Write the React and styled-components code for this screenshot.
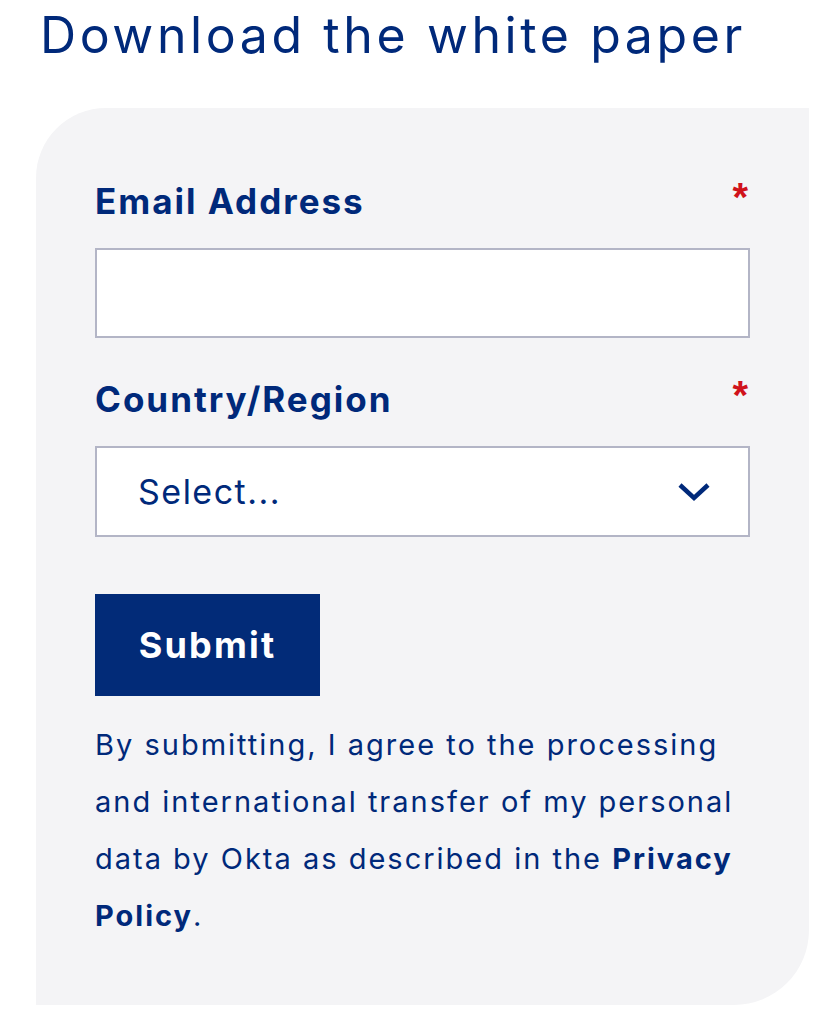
import React from 'react'
import styled, { createGlobalStyle } from 'styled-components'

const GlobalStyle = createGlobalStyle`
  body {
    margin: 0;
    background: #fff;
    font-family: Inter, 'Liberation Sans', Arial, sans-serif;
    color: #00297a;
  }
`

const Page = styled.div`
  width: 833px;
  height: 1024px;
  overflow: hidden;
`

const Heading = styled.h1`
  margin: 0;
  padding: 6px 0 0 40px;
  font-size: 50px;
  line-height: 58px;
  font-weight: 400;
  letter-spacing: 3.6px;
  color: #00297a;
`

const Card = styled.form`
  margin: 44px 0 0 36px;
  width: 773px;
  box-sizing: border-box;
  padding: 71px 59px 61px 59px;
  background: #f4f4f6;
  border-radius: 70px 0 75px 0;
  display: flex;
  flex-direction: column;
`

const Field = styled.div`
  display: flex;
  flex-direction: column;
  gap: 25px;
  & + & {
    margin-top: 39px;
  }
`

const LabelRow = styled.div`
  display: flex;
  justify-content: space-between;
  align-items: flex-start;
`

const Label = styled.label`
  font-size: 35px;
  line-height: 44px;
  font-weight: 700;
  letter-spacing: 2px;
  color: #00297a;
`

const Required = styled.span`
  color: #d0121b;
  font-family: 'Liberation Sans', Arial, sans-serif;
  font-size: 40px;
  line-height: 40px;
  font-weight: 700;
  margin-top: -2px;
  margin-right: 2px;
`

const Input = styled.input`
  height: 90px;
  box-sizing: border-box;
  border: 2px solid #b3b5c6;
  background: #fff;
  outline: none;
  font-family: inherit;
  font-size: 34px;
  padding: 0 40px;
`

const SelectBox = styled.div`
  height: 91px;
  box-sizing: border-box;
  border: 2px solid #b3b5c6;
  background: #fff;
  display: flex;
  align-items: center;
  justify-content: space-between;
  padding: 0 37px 0 41px;
  font-size: 34px;
  letter-spacing: 1.5px;
  color: #00297a;
`

const Button = styled.button`
  margin-top: 57px;
  align-self: flex-start;
  width: 225px;
  height: 102px;
  border: none;
  background: #022b78;
  color: #fff;
  font-family: inherit;
  font-size: 36px;
  font-weight: 700;
  letter-spacing: 2.2px;
  cursor: pointer;
`

const Consent = styled.p`
  margin: 20px 0 0 0;
  font-size: 29px;
  line-height: 57px;
  letter-spacing: 2px;
  color: #00297a;

  b {
    font-weight: 700;
  }
`

export default function App() {
  return (
    <Page>
      <GlobalStyle />
      <Heading>Download the white paper</Heading>
      <Card onSubmit={e => e.preventDefault()}>
        <Field>
          <LabelRow>
            <Label>Email Address</Label>
            <Required>*</Required>
          </LabelRow>
          <Input type="email" />
        </Field>
        <Field>
          <LabelRow>
            <Label>Country/Region</Label>
            <Required>*</Required>
          </LabelRow>
          <SelectBox>
            <span>Select...</span>
            <svg width="34" height="22" viewBox="0 0 34 22" fill="none">
              <path d="M3 4 L17 17 L31 4" stroke="#00297a" strokeWidth="4.5" />
            </svg>
          </SelectBox>
        </Field>
        <Button type="submit">Submit</Button>
        <Consent>
          By submitting, I agree to the processing<br />
          and international transfer of my personal<br />
          data by Okta as described in the <b>Privacy</b><br />
          <b>Policy</b>.
        </Consent>
      </Card>
    </Page>
  )
}
